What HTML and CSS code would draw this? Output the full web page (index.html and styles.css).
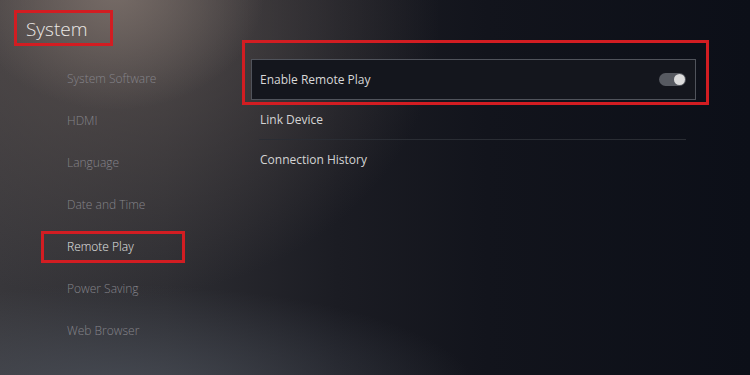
FILE: index.html
```html
<!DOCTYPE html>
<html lang="en">
<head>
    <meta charset="UTF-8">
    <meta name="viewport" content="width=device-width, initial-scale=1.0">
    <title>System - Remote Play</title>
    <link rel="stylesheet" href="styles.css">
</head>
<body>
<div class="screen">
    <div class="sidebar">
        <h1 class="title">System</h1>
        <ul class="menu">
            <li><span class="label">System Software</span></li>
            <li><span class="label">HDMI</span></li>
            <li><span class="label">Language</span></li>
            <li><span class="label">Date and Time</span></li>
            <li class="active"><span class="label">Remote Play</span></li>
            <li><span class="label">Power Saving</span></li>
            <li><span class="label">Web Browser</span></li>
        </ul>
    </div>
    <div class="main">
        <div class="highlight">
            <div class="option">
                <span>Enable Remote Play</span>
                <span class="toggle"><span class="knob"></span></span>
            </div>
        </div>
        <div class="rows">
            <div class="row">Link Device</div>
            <div class="row">Connection History</div>
        </div>
    </div>
</div>
</body>
</html>
```

FILE: styles.css
```css
body {
    margin: 0;
    padding: 0;
    font-family: "Open Sans", "Noto Sans", sans-serif;
    overflow: hidden;
}
.screen {
    width: 750px;
    height: 375px;
    display: flex;
    background:
        radial-gradient(ellipse 150px 120px at 115px -10px, rgba(128, 116, 110, 0.8), rgba(128, 116, 110, 0) 100%),
        radial-gradient(ellipse 330px 280px at 110px 20px, rgba(88, 80, 78, 0.85), rgba(88, 80, 78, 0) 100%),
        radial-gradient(ellipse 360px 110px at 120px 395px, rgba(78, 84, 94, 0.75), rgba(78, 84, 94, 0) 100%),
        linear-gradient(90deg, #38373b 0%, #2d2d32 22%, #1b1c23 45%, #12141c 65%, #0c0f18 100%);
}
.sidebar {
    width: 242px;
    padding: 10px 0 0 14px;
    box-sizing: border-box;
}
.title {
    display: inline-block;
    margin: 0;
    width: 99px;
    height: 36px;
    box-sizing: border-box;
    border: 3px solid #d21d22;
    padding: 2px 0 0 9px;
    font-size: 19px;
    font-weight: 300;
    line-height: 28px;
    color: #ebe8e6;
}
.menu {
    list-style: none;
    margin: 12px 0 0 0;
    padding: 0;
}
.menu li {
    height: 42px;
    display: flex;
    align-items: center;
}
.label {
    margin-left: 27px;
    width: 144px;
    height: 32px;
    box-sizing: border-box;
    border: 3px solid transparent;
    padding-left: 23px;
    font-size: 12px;
    font-weight: 300;
    line-height: 26px;
    color: #85848a;
}
.active .label {
    border-color: #d21d22;
    color: #e6e6e6;
}
.main {
    flex: 1;
    padding-top: 40px;
}
.highlight {
    width: 467px;
    height: 65px;
    box-sizing: border-box;
    border: 3px solid #d21d22;
    padding: 16px 10px 2px 6px;
}
.option {
    height: 41px;
    box-sizing: border-box;
    border: 1px solid #50535b;
    background: #14161d;
    display: flex;
    align-items: center;
    justify-content: space-between;
    padding: 0 9px 0 8px;
    font-size: 12px;
    color: #d8d8d8;
}
.toggle {
    width: 26px;
    height: 13px;
    border-radius: 7px;
    background: #575a61;
    display: flex;
    align-items: center;
    justify-content: flex-end;
    padding-right: 1px;
}
.knob {
    width: 11px;
    height: 11px;
    border-radius: 50%;
    background: #dcdcdc;
}
.rows {
    margin: -5px 0 0 17px;
    width: 427px;
}
.row {
    height: 39px;
    display: flex;
    align-items: center;
    padding-left: 1px;
    font-size: 12px;
    color: #d4d4d4;
}
.row:first-child {
    border-bottom: 1px solid #2a2d34;
}
```
